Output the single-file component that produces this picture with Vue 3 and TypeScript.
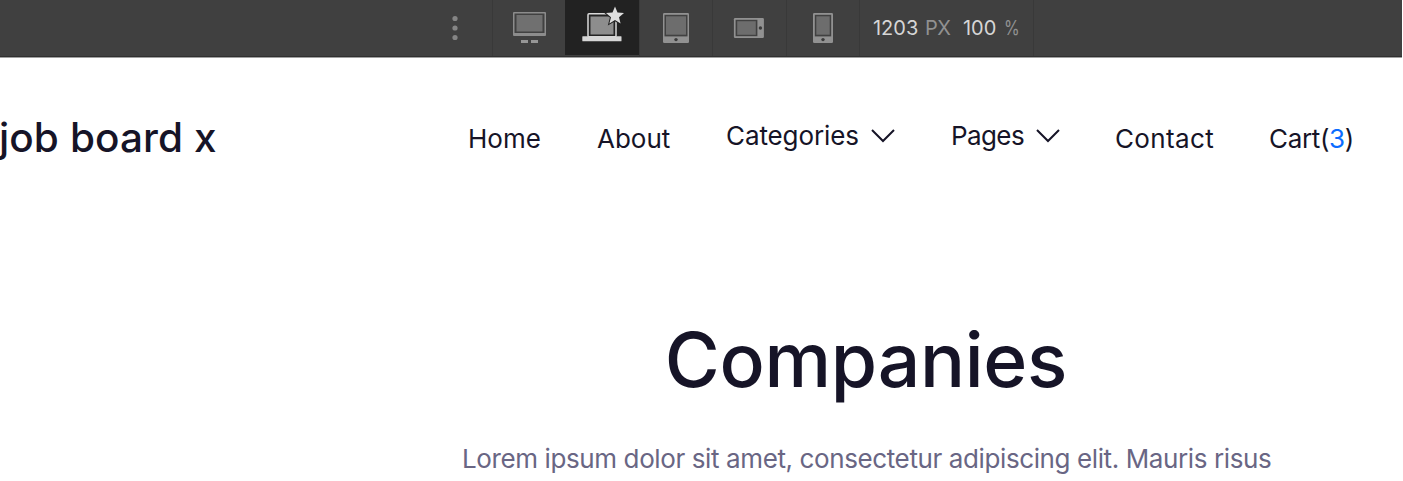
<script setup lang="ts">
interface NavItem {
  key: string
  label: string
  menu?: boolean
  count?: number
}

const devices: string[] = ['desktop', 'laptop', 'tablet', 'landscape', 'phone']

const navItems: NavItem[] = [
  { key: 'home', label: 'Home' },
  { key: 'about', label: 'About' },
  { key: 'categories', label: 'Categories', menu: true },
  { key: 'pages', label: 'Pages', menu: true },
  { key: 'contact', label: 'Contact' },
  { key: 'cart', label: 'Cart', count: 3 },
]
</script>

<template>
  <div class="page">
    <div class="toolbar">
      <div class="more">
        <svg width="8" height="28" viewBox="0 0 8 28">
          <circle cx="4" cy="4.5" r="2.6" />
          <circle cx="4" cy="14" r="2.6" />
          <circle cx="4" cy="23.5" r="2.6" />
        </svg>
      </div>
      <div v-for="d in devices" :key="d" class="device" :class="{ active: d === 'laptop' }">
        <svg v-if="d === 'desktop'" width="73" height="56" viewBox="0 0 73 56">
          <rect x="20" y="12" width="33" height="24" rx="1" fill="#8c8c8c" />
          <rect x="21.5" y="13.5" width="30" height="19.5" fill="#414141" />
          <rect x="23.5" y="15" width="26" height="16.5" fill="#707070" />
          <path d="M28 40h7v3h-7zM38 40h7v3h-7z" fill="#969696" />
        </svg>
        <svg v-else-if="d === 'laptop'" width="73" height="56" viewBox="0 0 73 56">
          <rect x="22" y="13.8" width="28" height="23" rx="1" fill="#232323" stroke="#dadada" stroke-width="1.5" />
          <rect x="24.5" y="16.5" width="23" height="18" fill="#8d8d8d" />
          <rect x="16.3" y="36.2" width="39.2" height="5" rx=".5" fill="#d6d6d6" />
          <path
            d="M49 6.5l2.5 6 6.5.5-5 4.2 1.6 6.3-5.6-3.4-5.6 3.4 1.6-6.3-5-4.2 6.5-.5z"
            fill="#dedede" stroke="#222" stroke-width="2" paint-order="stroke"
          />
        </svg>
        <svg v-else-if="d === 'tablet'" width="73" height="56" viewBox="1 0 73 56">
          <rect x="24" y="13" width="26" height="30" rx="1.2" fill="#919191" />
          <rect x="25.5" y="14.8" width="23" height="21.6" fill="#414141" />
          <rect x="27" y="16.3" width="20" height="18.4" fill="#6d6d6d" />
          <circle cx="37" cy="39.6" r="1.7" fill="#3b3b3b" />
        </svg>
        <svg v-else-if="d === 'landscape'" width="73" height="56" viewBox="0.6 0 73 56">
          <rect x="21.5" y="18" width="30" height="20" rx="1.2" fill="#919191" />
          <rect x="23.2" y="19.8" width="21.8" height="16.4" fill="#414141" />
          <rect x="24.8" y="21.2" width="18.6" height="13.6" fill="#6d6d6d" />
          <circle cx="48" cy="28" r="1.7" fill="#3b3b3b" />
        </svg>
        <svg v-else width="73" height="56" viewBox="1 0 73 56">
          <rect x="27" y="13" width="20" height="30" rx="1.2" fill="#919191" />
          <rect x="28.8" y="14.8" width="16.4" height="21.6" fill="#414141" />
          <rect x="30.3" y="16.3" width="13.4" height="18.4" fill="#6d6d6d" />
          <circle cx="37" cy="39.6" r="1.7" fill="#3b3b3b" />
        </svg>
      </div>
      <div class="size">
        <span class="value width">1203</span>
        <span class="unit px">PX</span>
        <span class="value zoom">100</span>
        <span class="unit percent">%</span>
      </div>
    </div>

    <header class="header">
      <div class="logo">job board x</div>
      <nav class="nav">
        <a v-for="item in navItems" :key="item.key" class="item" :class="[item.key, { raised: item.menu }]">
          <span class="label">{{ item.label }}<template v-if="item.count">(<b>{{ item.count }}</b>)</template></span>
          <svg v-if="item.menu" class="chevron" width="26" height="16" viewBox="0 0 26 16">
            <path d="M2 2l11 11L24 2" fill="none" stroke="currentColor" stroke-width="2" />
          </svg>
        </a>
      </nav>
    </header>

    <main class="hero">
      <h1>Companies</h1>
      <p>Lorem ipsum dolor sit amet, consectetur adipiscing elit. Mauris risus</p>
    </main>
  </div>
</template>

<style>
body {
  margin: 0;
  background: #fff;
}
</style>

<style scoped>
.page {
  width: 1403px;
  height: 481px;
  overflow: hidden;
  background: #fff;
  font-family: Inter, "Liberation Sans", sans-serif;
  color: #161427;
}

.toolbar {
  display: flex;
  box-sizing: border-box;
  width: 1402px;
  height: 57px;
  padding-left: 418px;
  background: #404040;
  border-bottom: 1px solid #303030;
  box-shadow: 0 1px 0 #a0a0a0;
}

.more {
  display: flex;
  align-items: center;
  justify-content: center;
  width: 74px;
  fill: #858585;
}

.device {
  box-sizing: border-box;
  width: 73.4px;
  border-left: 1px solid #393939;
  overflow: hidden;
}

.device svg {
  display: block;
}

.device.active {
  height: 55px;
  background: #222;
  border-color: #222;
}

.size {
  display: flex;
  align-items: center;
  box-sizing: border-box;
  width: 175px;
  padding-left: 13px;
  border-left: 1px solid #393939;
  border-right: 1px solid #393939;
  font-size: 20px;
  line-height: 24px;
  white-space: nowrap;
}

.value {
  color: #d6d6d6;
}

.unit {
  color: #919191;
}

.width {
  width: 52px;
}

.px {
  width: 38px;
  letter-spacing: -0.6px;
}

.zoom {
  width: 41px;
}

.percent {
  transform: scaleX(0.8);
  transform-origin: left;
}

.header {
  display: flex;
  height: 163px;
  align-items: center;
}

.logo {
  width: 469px;
  margin-top: -1px;
  margin-left: -1px;
  font-size: 40.5px;
  font-weight: 500;
  line-height: 50px;
  letter-spacing: 0.1px;
  white-space: nowrap;
}

.nav {
  display: flex;
}

.item {
  display: flex;
  align-items: center;
  height: 34px;
  font-size: 26px;
  line-height: 34px;
  white-space: nowrap;
}

.raised {
  margin-top: -3px;
}

.label b {
  font-weight: 400;
  color: #0b6cff;
}

.chevron {
  flex: none;
}

.home {
  width: 129px;
}

.about {
  width: 129px;
}

.categories {
  width: 225px;
  letter-spacing: -0.1px;
}

.pages {
  width: 164px;
  letter-spacing: -0.6px;
}

.contact {
  width: 154px;
  letter-spacing: 0.35px;
}

.cart {
  letter-spacing: -0.35px;
}

.categories .label {
  width: 144px;
}

.pages .label {
  width: 84px;
}

.hero {
  padding: 94px 0 0 462px;
}

h1 {
  width: 808px;
  margin: 0;
  font-size: 75px;
  font-weight: 500;
  line-height: 92px;
  letter-spacing: -0.3px;
  text-align: center;
}

p {
  margin: 35px 0 0;
  color: #696684;
  font-size: 26px;
  line-height: 36px;
  letter-spacing: -0.39px;
  white-space: nowrap;
}
</style>
